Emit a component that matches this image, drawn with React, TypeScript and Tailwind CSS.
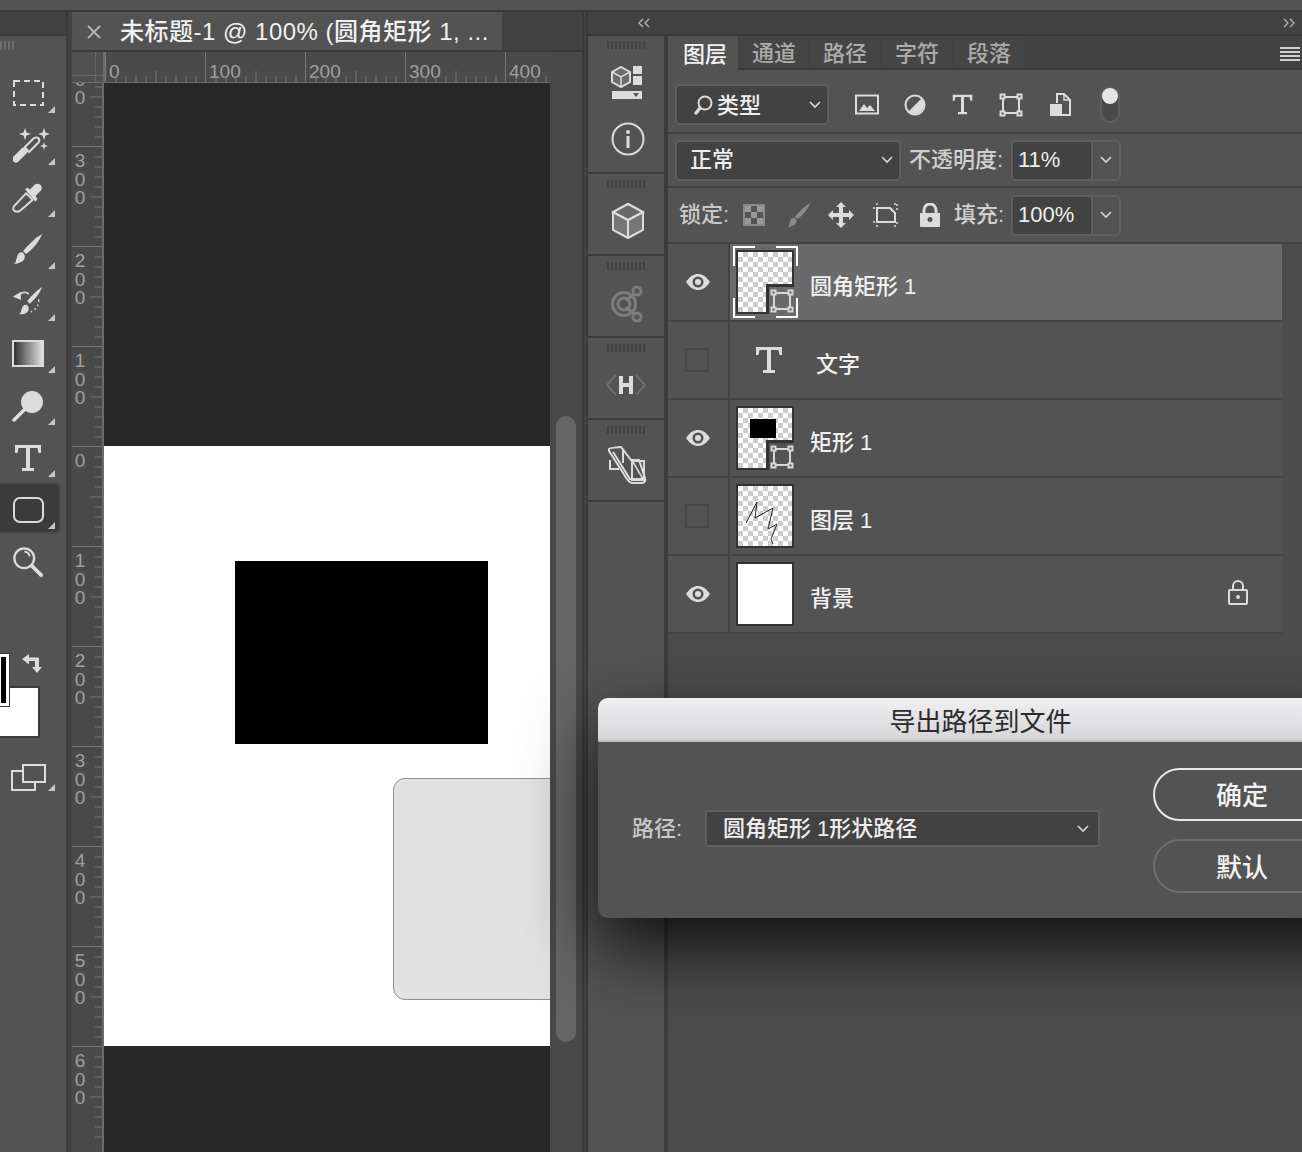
import React from "react";

const C = "#dcdcdc";

function Tri() {
  return (
    <svg className="absolute left-[48px] top-[39px]" width="7" height="7" viewBox="0 0 7 7">
      <path d="M7 0V7H0Z" fill="#c8c8c8" />
    </svg>
  );
}

function Tool({ children, tri = true, active = false, shift = "" }: { children: React.ReactNode; tri?: boolean; active?: boolean; shift?: string }) {
  return (
    <div className="relative h-[52px] w-[62px] flex items-center pl-[12px]">
      {active && <div className="absolute left-[-2px] top-[-1px] w-[63px] h-[52px] rounded-[4px] bg-[#3b3b3b] border-2 border-[#4b4b4b]" />}
      <div className={`relative w-[32px] h-[32px] flex items-center justify-center ${shift}`}>{children}</div>
      {tri && <Tri />}
    </div>
  );
}

function ToolBar() {
  return (
    <div className="w-[66px] shrink-0 flex flex-col">
      <div className="h-[22px] bg-[#424242]" />
      <div className="h-[2px] bg-[#3a3a3a]" />
      <div className="h-[5px]" />
      <div className="w-[14px] h-[9px] bg-[repeating-linear-gradient(90deg,#6c6c6c_0_2px,transparent_2px_4px)]" />
      <div className="h-[17px]" />
      <Tool>
        <svg width="32" height="28" viewBox="0 0 32 28" fill="none">
          <rect x="2" y="2" width="29" height="24" stroke={C} strokeWidth="2" strokeDasharray="6 4" />
        </svg>
      </Tool>
      <Tool shift="ml-[4px]">
        <svg className="shrink-0" width="38" height="36" viewBox="0 0 38 36" fill="none">
          <path d="M3 32 L11 24" stroke={C} strokeWidth="7" strokeLinecap="round" />
          <path d="M12 20 L20 12 C22 10 25 10 26 12 C27 14 26 15 25 16 L16 25z" stroke={C} strokeWidth="2" />
          <path d="M12 1l1.500 4.500L18 7l-4.500 1.500L12 13l-1.500-4.500L6 7l4.500-1.500zM31 1l1.500 4.500L37 7l-4.500 1.500L31 13l-1.500-4.500L25 7l4.500-1.500zM31 15l1 3 3 1-3 1-1 3-1-3-3-1 3-1z" fill={C} />
        </svg>
      </Tool>
      <Tool>
        <svg width="34" height="34" viewBox="0 0 34 34" fill="none">
          <path d="M3 32c-2-1-2-3-1-5L15 13l7 7L8 32c-2 1-3 1-5 0z" stroke={C} strokeWidth="2" />
          <path d="M14 9l2-2 3 2 5-5c2-2 6-1 7 1s1 4-1 6l-5 5 2 3-2 3-11-13z" fill={C} />
        </svg>
      </Tool>
      <Tool>
        <svg width="32" height="32" viewBox="0 0 32 32">
          <path d="M30 1C27 9 21 16 14 21l-3-3C17 11 23 5 30 1z" fill={C} />
          <path d="M2 31c3-2 2-8 5-11 2-1 4-1 5 1 2 3 0 7-3 8-2 1-5 2-7 2z" fill={C} />
        </svg>
      </Tool>
      <Tool>
        <svg width="36" height="34" viewBox="0 0 36 34" fill="none">
          <path d="M34 1C31 9 26 15 20 20l-3-3C22 11 28 5 34 1z" fill={C} />
          <path d="M8 32c3-2 2-7 5-10 2-1 4-1 5 1 2 3 0 7-3 8-2 1-5 1-7 1z" fill={C} />
          <path d="M9 9c3-2 7-2 10 0" stroke={C} strokeWidth="2" />
          <path d="M1 12l9-5v9z" fill={C} />
          <path d="M30 15v3M29 21v2M26 25v2M22 28v2" stroke={C} strokeWidth="1.5" />
        </svg>
      </Tool>
      <Tool>
        <div className="w-[32px] h-[27px] border-2 border-[#dcdcdc] bg-[linear-gradient(90deg,#333,#ddd)]" />
      </Tool>
      <Tool shift="mt-[1px]">
        <svg width="32" height="32" viewBox="0 0 32 32" fill="none">
          <circle cx="20" cy="12" r="11" fill={C} />
          <path d="M2 30 L12 20" stroke={C} strokeWidth="3.5" strokeLinecap="round" />
        </svg>
      </Tool>
      <Tool shift="mt-[2px]">
        <svg width="28" height="28" viewBox="0 0 28 28">
          <path d="M1 1h26v8h-2.500l-1-5H16v20h4v3H8v-3h4V4H4.500l-1 5H1z" fill={C} />
        </svg>
      </Tool>
      <Tool active shift="mt-[1px]">
        <div className="w-[31px] h-[26px] rounded-[7px] border-2 border-[#dcdcdc]" />
      </Tool>
      <Tool tri={false} shift="mt-[2px]">
        <svg width="34" height="34" viewBox="0 0 34 34" fill="none">
          <circle cx="13" cy="13" r="10.500" stroke={C} strokeWidth="2.500" />
          <path d="M13 6c3 0 5 2 6 5" stroke={C} strokeWidth="2" />
          <path d="M21 21 L31 31" stroke={C} strokeWidth="4" strokeLinecap="round" />
        </svg>
      </Tool>
      <div className="relative h-[151px] shrink-0">
        <div className="absolute left-[-2px] top-[99px] w-[42px] h-[52px] bg-white border-2 border-[#3a3a3a]" />
        <div className="absolute left-[-2px] top-[67px] w-[11px] h-[52px] bg-black border-[3px] border-white outline outline-1 outline-[#3a3a3a]" />
        <svg className="absolute left-[21px] top-[66px]" width="22" height="20" viewBox="0 0 22 20" fill={C}>
          <path d="M1 6l7-5v3.500h10V14h3l-5 6-5-6h3V8H8v3.500z" />
        </svg>
      </div>
      <div className="relative h-[52px] mt-[24px]">
        <svg className="absolute left-[11px] top-[2px]" width="35" height="27" viewBox="0 0 35 27" fill="none" stroke={C} strokeWidth="2">
          <rect x="12" y="1" width="22" height="17" />
          <path d="M12 7H1v19h23v-8" />
        </svg>
        <div className="absolute left-[48px] top-[22px]">
          <svg width="7" height="7" viewBox="0 0 7 7"><path d="M7 0V7H0Z" fill="#c8c8c8" /></svg>
        </div>
      </div>
    </div>
  );
}

function Ticks({ vertical = false }: { vertical?: boolean }) {
  const xs = [10, 20, 30, 40, 50, 60, 70, 80, 90];
  return vertical ? (
    <svg className="absolute right-0 top-0" width="12" height="100">
      {xs.map((v) => (
        <line key={v} x1={v === 50 ? 1 : 5} x2="12" y1={v} y2={v} stroke="#777" strokeWidth="1" />
      ))}
    </svg>
  ) : (
    <svg className="absolute left-0 bottom-0" width="100" height="12">
      {xs.map((v) => (
        <line key={v} y1={v === 50 ? 1 : 6} y2="12" x1={v} x2={v} stroke="#777" strokeWidth="1" />
      ))}
    </svg>
  );
}

function Ruler() {
  return (
    <div className="h-[31px] flex bg-[#4a4a4a] shrink-0 overflow-hidden border-b border-[#6b6b6b]">
      <div className="relative w-[33px] shrink-0 bg-[#505050] border-r-2 border-[#6b6b6b]">
        <div className="absolute left-[23px] top-0 bottom-0 border-l border-dotted border-[#777]" />
        <div className="absolute top-[23px] left-0 right-0 border-t border-dotted border-[#777]" />
      </div>
      {["0", "100", "200", "300", "400"].map((t) => (
        <div key={t} className="relative w-[100px] shrink-0 border-l border-[#777] pl-[3px] pt-[8px] text-[19px] leading-[24px] font-normal text-[#a0a0a0]">
          {t}
          <Ticks />
        </div>
      ))}
    </div>
  );
}

function VRuler() {
  const labels = ["400", "300", "200", "100", "0", "100", "200", "300", "400", "500", "600"];
  return (
    <div className="w-[32px] shrink-0 bg-[#4a4a4a] border-r-2 border-[#6b6b6b] overflow-hidden">
      <div className="mt-[-37px]">
        {labels.map((t, i) => (
          <div key={i} className="relative h-[100px] border-t border-[#777] pl-[2px] pt-[5px] text-[19px] leading-[18.500px] font-normal text-[#a0a0a0]">
            {t.split("").map((d, j) => (
              <div key={j} className="w-[12px] text-center">{d}</div>
            ))}
            <Ticks vertical />
          </div>
        ))}
      </div>
    </div>
  );
}

function Doc() {
  return (
    <div className="w-[510px] shrink-0 flex flex-col">
      <div className="h-[38px] flex bg-[#424242] shrink-0">
        <div className="w-[430px] bg-[#535353] flex items-center pl-[15px] pt-[1px] text-[24px] tracking-[0.5px] text-[#f0f0f0] whitespace-nowrap">
          <svg className="mr-[19px] shrink-0" width="14" height="14" viewBox="0 0 14 14" stroke="#b5b5b5" strokeWidth="1.800"><path d="M1 1l12 12M13 1L1 13" /></svg>
          未标题-1 @ 100% (圆角矩形 1, ...
        </div>
      </div>
      <div className="h-[2px] bg-[#3a3a3a] shrink-0" />
      <div className="flex flex-1 min-h-0">
        <div className="w-[478px] flex flex-col shrink-0">
          <Ruler />
          <div className="flex flex-1 min-h-0">
            <VRuler />
            <div className="flex-1 bg-[#282828] flex flex-col">
              <div className="h-[363px] shrink-0" />
              <div className="relative h-[600px] shrink-0 bg-white overflow-hidden">
                <div className="absolute left-[131px] top-[115px] w-[253px] h-[183px] bg-black" />
                <div className="absolute left-[289px] top-[332px] w-[200px] h-[222px] rounded-[12px] bg-[#e2e2e2] border border-[#8f8f8f]" />
              </div>
            </div>
          </div>
        </div>
        <div className="w-[32px] shrink-0 bg-[#494949] pl-[6px] pt-[364px]">
          <div className="w-[20px] h-[626px] rounded-full bg-[#666666]" />
        </div>
      </div>
    </div>
  );
}

function Grip() {
  return <div className="w-[38px] h-[8px] bg-[repeating-linear-gradient(90deg,#414141_0_2px,transparent_2px_4px)]" />;
}

function DockSection({ h, children, top = 6 }: { h: string; children: React.ReactNode; top?: number }) {
  return (
    <div className={`${h} shrink-0 flex flex-col items-center border-b-2 border-[#3c3c3c]`}>
      <div style={{ height: top }} />
      <Grip />
      {children}
    </div>
  );
}

function Dock() {
  return (
    <div className="w-[76px] shrink-0 flex flex-col">
      <DockSection h="h-[138px]" top={5}>
        <svg className="mt-[17px] ml-[2px]" width="32" height="34" viewBox="0 0 32 34" fill="none">
          <path d="M10 1l9 5v10l-9 5-9-5V6z" stroke={C} strokeWidth="2" fill="#6b6b6b" />
          <path d="M1 6l9 5 9-5M10 11v10" stroke={C} strokeWidth="1.500" />
          <rect x="22" y="0" width="9" height="8" fill={C} />
          <rect x="22" y="10" width="9" height="9" fill={C} />
          <path d="M1 25h30v8H1z" fill={C} />
          <path d="M22 27h6l-3 4z" fill="#555" />
        </svg>
        <svg className="mt-[22px] ml-[3px]" width="34" height="34" viewBox="0 0 34 34" fill="none">
          <circle cx="17" cy="17" r="15.500" stroke={C} strokeWidth="2" />
          <circle cx="17" cy="10" r="2" fill={C} />
          <rect x="15.500" y="14" width="3" height="12" fill={C} />
        </svg>
      </DockSection>
      <DockSection h="h-[82px]">
        <svg className="mt-[14px] ml-[4px]" width="34" height="38" viewBox="0 0 34 38" fill="none">
          <path d="M17 2l15 8v18l-15 8-15-8V10z" fill="#777" stroke={C} strokeWidth="2" />
          <path d="M2 10l15 8 15-8" stroke={C} strokeWidth="2" />
          <path d="M17 2l15 8-15 8-15-8z" fill="#6a6a6a" stroke={C} strokeWidth="2" />
          <path d="M17 18v18" stroke={C} strokeWidth="2" />
        </svg>
      </DockSection>
      <DockSection h="h-[82px]">
        <svg className="mt-[15px] ml-[2px]" width="34" height="38" viewBox="0 0 34 38" fill="none" stroke="#7d7d7d" strokeWidth="3">
          <circle cx="14" cy="19" r="11.500" />
          <circle cx="14" cy="19" r="6" />
          <circle cx="27" cy="6" r="4" />
          <circle cx="27" cy="32" r="4" />
          <path d="M24 9l-8 7M24 29l-8-7" />
        </svg>
      </DockSection>
      <DockSection h="h-[82px]">
        <div className="mt-[22px] flex items-center">
          <svg width="12" height="22" viewBox="0 0 12 22" fill="none" stroke="#6e6e6e" strokeWidth="2"><path d="M11 1L2 11l9 10" /></svg>
          <svg width="18" height="20" viewBox="0 0 18 20" fill={C}><path d="M2 1h4v7h6V1h4v18h-4v-7H6v7H2z" /></svg>
          <svg width="12" height="22" viewBox="0 0 12 22" fill="none" stroke="#6e6e6e" strokeWidth="2"><path d="M1 1l9 10-9 10" /></svg>
        </div>
      </DockSection>
      <DockSection h="h-[82px]">
        <svg className="mt-[11px] ml-[2px]" width="40" height="40" viewBox="0 0 40 40" fill="none" stroke={C} strokeWidth="2">
          <path d="M2 4c1-1 9-2 12-2l10 13h8l6 18c1 4-1 5-4 5H26c-3 0-4-1-6-4L2 6z" />
          <path d="M6 7l17 27h13" />
          <path d="M3 15v9h9" />
          <path d="M16 5v13" />
          <rect x="25" y="16" width="12" height="19" />
          <path d="M26 17l10 17" strokeWidth="1.500" />
        </svg>
      </DockSection>
    </div>
  );
}

function Tab({ t, w, active = false }: { t: string; w: string; active?: boolean }) {
  return (
    <div className={active ? `${w} h-[34px] pl-[4px] pt-[3px] flex items-center justify-center text-[22px] text-[#f2f2f2] bg-[#535353] mr-[2px]` : `${w} h-[32px] pt-[4px] flex items-center justify-center text-[22px] text-[#ababab] bg-[#454545] mr-[2px]`}>
      {t}
    </div>
  );
}

function Chevron({ className = "" }: { className?: string }) {
  return (
    <svg className={className} width="12" height="8" viewBox="0 0 12 8" fill="none" stroke="#d8d8d8" strokeWidth="1.600"><path d="M1 1l5 5 5-5" /></svg>
  );
}

function SelectBox({ w, children }: { w: string; children: React.ReactNode }) {
  return (
    <div className={`${w} h-[41px] shrink-0 rounded-[5px] bg-[#424242] border-2 border-[#5f5f5f] flex items-center justify-between pr-[6px] text-[22px] text-[#eeeeee]`}>
      {children}
      <Chevron />
    </div>
  );
}

function ValueBox({ v }: { v: string }) {
  return (
    <div className="w-[110px] h-[41px] shrink-0 rounded-[5px] border-2 border-[#5f5f5f] flex text-[22px] text-[#eeeeee] overflow-hidden">
      <div className="w-[78px] bg-[#424242] pl-[5px] flex items-center">{v}</div>
      <div className="flex-1 border-l-2 border-[#5f5f5f] flex items-center justify-center"><Chevron /></div>
    </div>
  );
}

function Eye() {
  return (
    <svg width="26" height="18" viewBox="0 0 26 18">
      <path fillRule="evenodd" fill={C} d="M1 9C5 3 9 1 13 1s8 2 12 8c-4 6-8 8-12 8S5 15 1 9zm12-5.500a5.500 5.500 0 100 11 5.500 5.500 0 000-11z" />
      <circle cx="13" cy="9" r="3" fill={C} />
    </svg>
  );
}

function Vector({ stroke = "#d8d8d8" }: { stroke?: string }) {
  return (
    <svg width="24" height="24" viewBox="0 0 24 24" fill="none" stroke={stroke} strokeWidth="2">
      <rect x="4" y="4" width="16" height="16" />
      <rect x="1.500" y="1.500" width="4" height="4" fill="#555" />
      <rect x="18.500" y="1.500" width="4" height="4" fill="#555" />
      <rect x="1.500" y="18.500" width="4" height="4" fill="#555" />
      <rect x="18.500" y="18.500" width="4" height="4" fill="#555" />
    </svg>
  );
}

const checker = "bg-[conic-gradient(#cdcdcd_25%,#ffffff_0_50%,#cdcdcd_0_75%,#ffffff_0)] bg-[length:10px_10px]";

function Thumb({ kind, corner }: { kind: "round" | "rect" | "raster" | "bg"; corner: string }) {
  const masked = kind === "round" || kind === "rect";
  return (
    <div className={`relative w-[58px] h-[64px] shrink-0 border-2 border-[#333333] ${kind === "bg" ? "bg-white" : checker}`}>
      {kind === "rect" && <div className="absolute left-[12px] top-[11px] w-[26px] h-[19px] bg-black" />}
      {kind === "raster" && (
        <svg className="absolute left-0 top-0" width="54" height="60" viewBox="0 0 54 60" fill="none" stroke="#222" strokeWidth="1">
          <path d="M8 37 L19 16 L17 32 L35 22 L30 43 L39 38 L33 53 L35 58" />
        </svg>
      )}
      {masked && (
        <div className={`absolute right-[-2px] bottom-[-2px] w-[28px] h-[30px] border-t-[3px] border-l-[3px] border-[#333333] flex items-center justify-center ${corner}`}>
          <Vector />
        </div>
      )}
    </div>
  );
}

function LayerRow({ vis, thumb, name, selected = false, lock = false, type = false }: { vis: boolean; thumb?: "round" | "rect" | "raster" | "bg"; name: string; selected?: boolean; lock?: boolean; type?: boolean }) {
  return (
    <div className="h-[78px] shrink-0 w-[614px] flex border-b-2 border-[#434343] bg-[#535353]">
      <div className="w-[60px] shrink-0 border-r-2 border-[#434343] flex items-center justify-center box-content">
        {vis ? <div className="h-[18px]"><Eye /></div> : <div className="w-[24px] h-[24px] border-2 border-[#474747] -ml-[2px]" />}
      </div>
      <div className={`relative flex-1 flex items-center pl-[6px] ${selected ? "bg-[#6a6a6a]" : ""}`}>
        {selected && (
          <>
            <div className="absolute left-[3px] top-[2px] w-[22px] h-[20px] border-t-2 border-l-2 border-white" />
            <div className="absolute left-[46px] top-[2px] w-[22px] h-[20px] border-t-2 border-r-2 border-white" />
            <div className="absolute left-[3px] top-[54px] w-[22px] h-[20px] border-b-2 border-l-2 border-white" />
            <div className="absolute left-[46px] top-[54px] w-[22px] h-[20px] border-b-2 border-r-2 border-white" />
          </>
        )}
        {thumb ? <Thumb kind={thumb} corner={selected ? "bg-[#6a6a6a]" : "bg-[#535353]"} /> : null}
        {type ? (
          <>
            <svg className="ml-[19px] -mt-[1px]" width="28" height="28" viewBox="0 0 28 28"><path d="M1 1h26v8h-2.500l-1-5H16v20h4v3H8v-3h4V4H4.500l-1 5H1z" fill={C} /></svg>
            <span className="ml-[33px] mt-[10px] text-[22px] text-[#f0f0f0]">{name}</span>
          </>
        ) : (
          <span className="ml-[16px] mt-[10px] text-[22px] text-[#f0f0f0] whitespace-nowrap">{name}</span>
        )}
        {lock && (
          <svg className="absolute left-[497px] top-[24px]" width="22" height="26" viewBox="0 0 22 26" fill="none" stroke={C} strokeWidth="2">
            <rect x="2" y="10" width="18" height="14" rx="1" />
            <path d="M6 10V6a5 5 0 0110 0v4" />
            <circle cx="11" cy="17" r="2" fill={C} stroke="none" />
          </svg>
        )}
      </div>
    </div>
  );
}

function Panel() {
  return (
    <div className="flex-1 min-w-0 flex flex-col bg-[#4c4c4c]">
      <div className="h-[34px] bg-[#424242] flex relative shrink-0 border-b-2 border-[#3a3a3a]">
        <div className="flex">
          <Tab t="图层" w="w-[70px]" active />
          <Tab t="通道" w="w-[68px]" />
          <Tab t="路径" w="w-[70px]" />
          <Tab t="字符" w="w-[70px]" />
          <Tab t="段落" w="w-[70px]" />
        </div>
        <svg className="absolute left-[611px] top-[11px]" width="22" height="14" viewBox="0 0 22 14" stroke="#cfcfcf" strokeWidth="2">
          <path d="M1 1h20M1 5h20M1 9h20M1 13h20" />
        </svg>
      </div>
      <div className="h-[64px] bg-[#535353] border-b-2 border-[#424242] flex items-center pl-[7px] pt-[7px] shrink-0">
        <SelectBox w="w-[154px]">
          <div className="flex items-center pl-[16px] gap-[4px]">
            <svg width="20" height="22" viewBox="0 0 20 22" fill="none" stroke={C}>
              <circle cx="12" cy="9" r="6.500" strokeWidth="2" />
              <path d="M3 19l4-5" strokeWidth="3.500" strokeLinecap="round" />
            </svg>
            <span className="pt-[2px]">类型</span>
          </div>
        </SelectBox>
        <svg className="ml-[26px]" width="24" height="22" viewBox="0 0 24 22" fill="none">
          <rect x="1" y="1.500" width="22" height="18" stroke={C} strokeWidth="2" />
          <path d="M4 17l5-7 3 4 3-3 5 6z" fill={C} />
        </svg>
        <svg className="ml-[25px]" width="22" height="22" viewBox="0 0 22 22">
          <circle cx="11" cy="11" r="9.500" fill="none" stroke={C} strokeWidth="2" />
          <path d="M4 18L18 4a10 10 0 01-14 14z" fill={C} />
        </svg>
        <svg className="ml-[26px]" width="21" height="21" viewBox="0 0 28 28"><path d="M1 1h26v8h-2.500l-1-5H16v20h4v3H8v-3h4V4H4.500l-1 5H1z" fill={C} /></svg>
        <div className="ml-[26px]"><Vector stroke={C} /></div>
        <svg className="ml-[26px]" width="22" height="24" viewBox="0 0 22 24" fill="none">
          <path d="M8 10V1h7l6 6v15H12" stroke={C} strokeWidth="2" />
          <path d="M15 1v6h6" stroke={C} strokeWidth="1.500" />
          <rect x="1" y="11" width="12" height="12" fill={C} />
        </svg>
        <div className="relative ml-[29px] w-[20px] h-[36px] rounded-full border-2 border-[#5f5f5f] bg-[#4a4a4a]">
          <div className="absolute left-0 top-[-1px] w-[16px] h-[16px] rounded-full bg-[#e4e4e4]" />
        </div>
      </div>
      <div className="h-[54px] bg-[#535353] border-b-2 border-[#424242] flex items-center pl-[7px] shrink-0">
        <SelectBox w="w-[226px]"><span className="pl-[13px]">正常</span></SelectBox>
        <span className="ml-[8px] w-[102px] text-[22px] text-[#d0d0d0] whitespace-nowrap">不透明度:</span>
        <ValueBox v="11%" />
      </div>
      <div className="h-[56px] bg-[#535353] border-b-2 border-[#424242] flex items-center pl-[11px] shrink-0">
        <span className="w-[64px] text-[22px] text-[#c8c8c8] whitespace-nowrap">锁定:</span>
        <div className="w-[22px] h-[22px] border-2 border-[#8a8a8a] bg-[conic-gradient(#555_25%,#999_0_50%,#555_0_75%,#999_0)] bg-[length:12px_12px]" />
        <svg className="ml-[21px]" width="26" height="28" viewBox="0 0 32 32">
          <path d="M30 1C27 9 21 16 14 21l-3-3C17 11 23 5 30 1z" fill="#8a8a8a" />
          <path d="M2 31c3-2 2-8 5-11 2-1 4-1 5 1 2 3 0 7-3 8-2 1-5 2-7 2z" fill="#8a8a8a" />
        </svg>
        <svg className="ml-[16px]" width="26" height="26" viewBox="0 0 26 26" fill={C}>
          <path d="M13 0l5 5h-3v6h6V8l5 5-5 5v-3h-6v6h3l-5 5-5-5h3v-6H5v3l-5-5 5-5v3h6V5H8z" />
        </svg>
        <svg className="ml-[18px]" width="28" height="24" viewBox="0 0 28 24" fill="none" stroke={C} strokeWidth="2">
          <path d="M5 5h13l5 5v9H5z" />
          <path d="M1 5h2M25 1v2M25 5v2M1 19h2M25 19v2M5 22v2M23 22v2M5 0v2M23 0v2" strokeWidth="1.500" />
        </svg>
        <svg className="ml-[19px]" width="22" height="24" viewBox="0 0 22 24" fill="none">
          <path d="M5 10V7a6 6 0 0112 0v3" stroke={C} strokeWidth="3" />
          <path fillRule="evenodd" d="M1 10h20v13a1 1 0 01-1 1H2a1 1 0 01-1-1zm10 4a2.500 2.500 0 100 5 2.500 2.500 0 000-5z" fill={C} />
        </svg>
        <span className="ml-[13px] w-[57px] text-[22px] text-[#d0d0d0] whitespace-nowrap">填充:</span>
        <ValueBox v="100%" />
      </div>
      <LayerRow vis thumb="round" name="圆角矩形 1" selected />
      <LayerRow vis={false} name="文字" type />
      <LayerRow vis thumb="rect" name="矩形 1" />
      <LayerRow vis={false} thumb="raster" name="图层 1" />
      <LayerRow vis thumb="bg" name="背景" lock />
    </div>
  );
}

function Dialog() {
  return (
    <div className="absolute left-[598px] top-[698px] w-[765px] h-[220px] rounded-[10px] overflow-hidden bg-[#535353] flex flex-col shadow-[0_30px_70px_rgba(0,0,0,0.8)]">
      <div className="h-[44px] shrink-0 pt-[5px] bg-[linear-gradient(#f0eff1,#d5d4d6)] border-b-2 border-[#bdbdbd] flex items-center justify-center text-[26px] font-normal text-[#2c2c2c]">
        导出路径到文件
      </div>
      <div className="flex-1 flex items-start">
        <div className="flex items-center pl-[34px] mt-[68px]">
          <span className="w-[73px] text-[22px] text-[#c8c8c8]">路径:</span>
          <div className="w-[395px] h-[37px] rounded-[3px] bg-[#424242] border-2 border-[#5f5f5f] flex items-center justify-between pl-[16px] pr-[9px] text-[22px] text-[#eeeeee]">
            <span>圆角矩形 1形状路径</span>
            <Chevron />
          </div>
        </div>
        <div className="ml-[53px] mt-[26px] flex flex-col gap-[18px]">
          <div className="w-[178px] h-[53px] pt-[3px] rounded-full border-2 border-[#e8e8e8] flex items-center justify-center text-[26px] text-[#f2f2f2]">确定</div>
          <div className="w-[178px] h-[54px] pt-[3px] rounded-full border-2 border-[#6f6f6f] flex items-center justify-center text-[26px] text-[#f2f2f2]">默认</div>
        </div>
      </div>
    </div>
  );
}

export default function App() {
  return (
    <div className="relative w-[1302px] h-[1152px] overflow-hidden bg-[#535353] flex flex-col font-['Liberation_Sans','Noto_Sans_CJK_SC',sans-serif] font-medium leading-none">
      <div className="h-[10px] shrink-0" />
      <div className="h-[2px] shrink-0 bg-[#3a3a3a]" />
      <div className="flex flex-1 min-h-0">
        <ToolBar />
        <div className="w-[6px] shrink-0 bg-[#434343] border-l-2 border-[#3a3a3a]" />
        <Doc />
        <div className="w-[6px] shrink-0 bg-[#434343] border-x-2 border-[#3a3a3a]" />
        <div className="flex-1 min-w-0 flex flex-col">
          <div className="h-[24px] shrink-0 bg-[#424242] border-b-2 border-[#3a3a3a] flex justify-between items-center px-[6px] text-[#b5b5b5]">
            <svg className="ml-[43px]" width="14" height="10" viewBox="0 0 14 10" fill="none" stroke="#b5b5b5" strokeWidth="1.300"><path d="M6 1L2 5l4 4M12 1L8 5l4 4" /></svg>
            <svg width="14" height="10" viewBox="0 0 14 10" fill="none" stroke="#b5b5b5" strokeWidth="1.300"><path d="M2 1l4 4-4 4M8 1l4 4-4 4" /></svg>
          </div>
          <div className="flex flex-1 min-h-0">
            <Dock />
            <div className="w-[4px] shrink-0 bg-[#3c3c3c]" />
            <Panel />
          </div>
        </div>
      </div>
      <Dialog />
    </div>
  );
}
